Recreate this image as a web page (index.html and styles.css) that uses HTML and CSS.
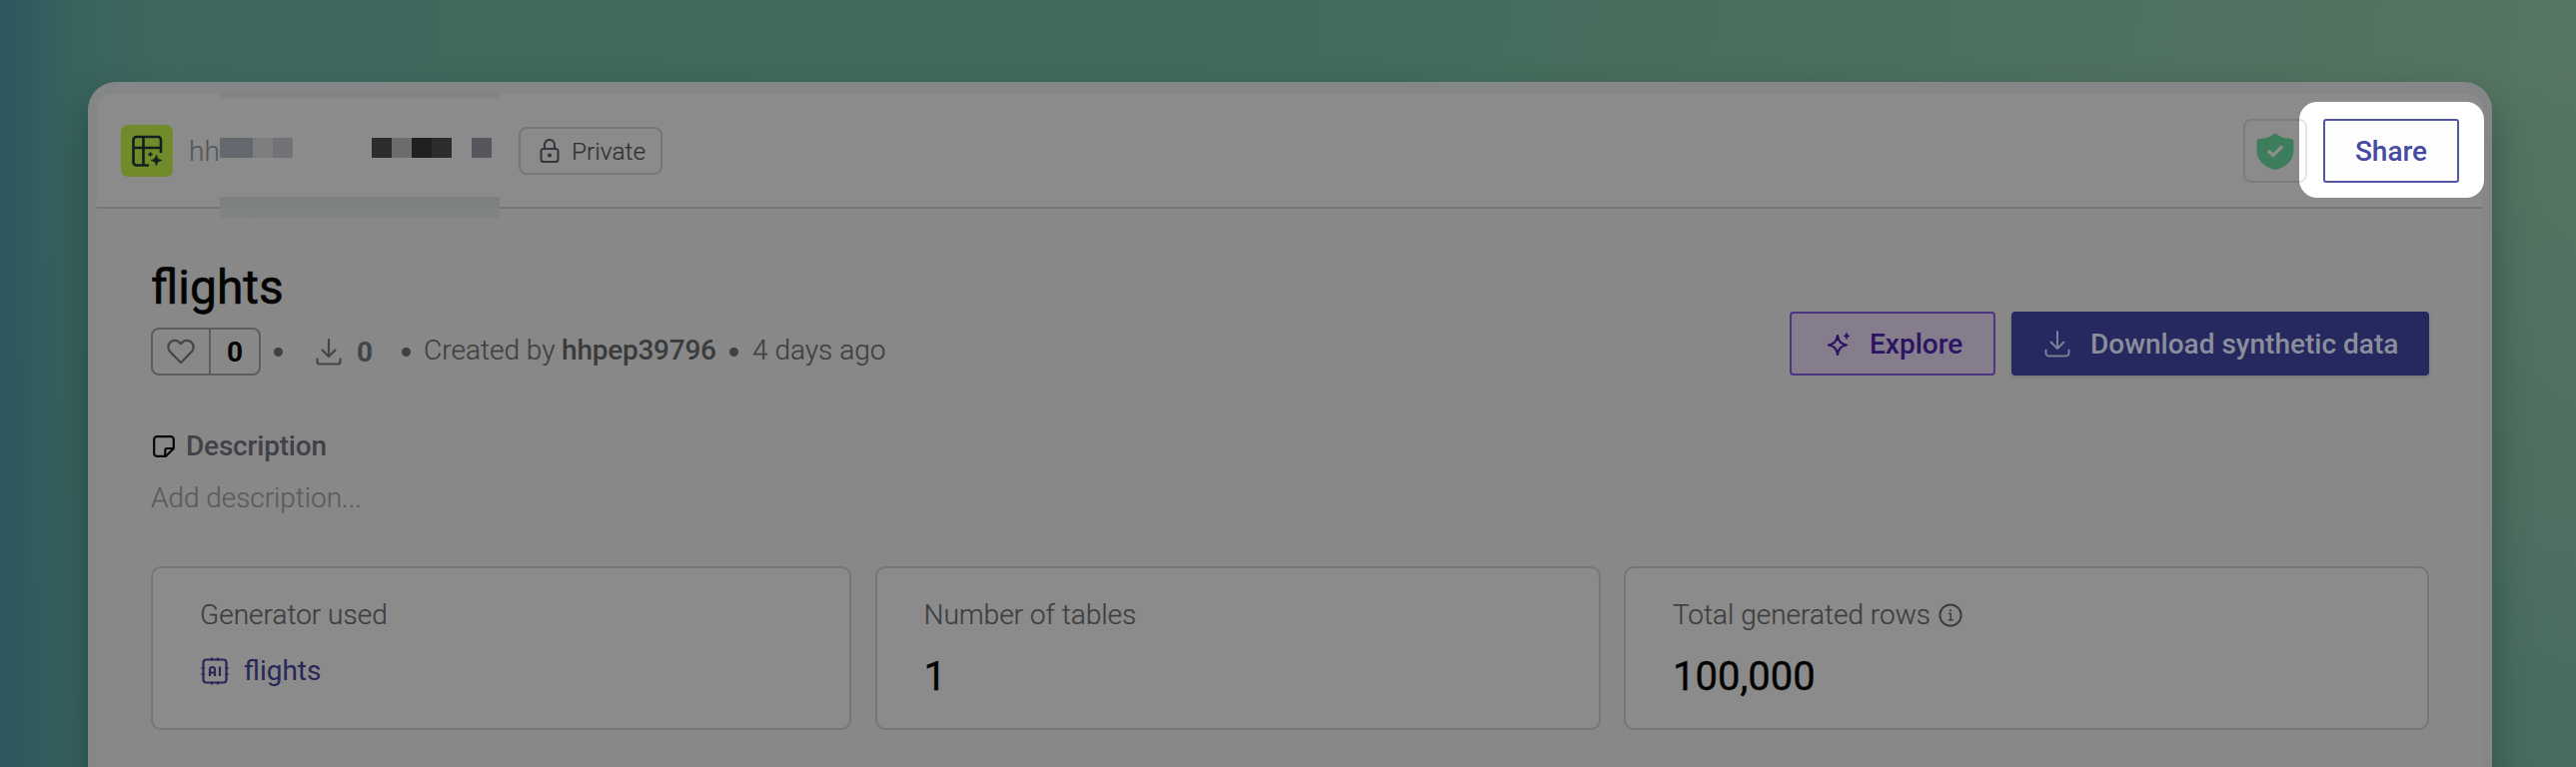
FILE: index.html
```html
<!DOCTYPE html>
<html lang="en">
<head>
<meta charset="utf-8">
<title>flights</title>
<link rel="stylesheet" href="styles.css">
</head>
<body>
<div class="desktop">
<div class="window">
  <header class="header">
    <svg class="logo" viewBox="0 0 52 52" width="52" height="52"><rect width="52" height="52" rx="7" fill="#728b2a"/><g fill="none" stroke="#10201e" stroke-width="2.600" stroke-linecap="round" stroke-linejoin="round"><path d="M27 40.500H15.500a3 3 0 0 1-3-3V15a3 3 0 0 1 3-3H37a3 3 0 0 1 3 3v12M12.500 23H40M22.500 12v28.500"/></g><path fill="#10201e" d="M35.500 30c.8 3.700 1.800 4.700 5.500 5.500-3.700.8-4.700 1.800-5.500 5.500-.8-3.700-1.800-4.700-5.500-5.500 3.700-.8 4.700-1.800 5.500-5.500zM29.500 27c.3 1.600.9 2.200 2.500 2.500-1.600.3-2.200.9-2.500 2.500-.3-1.600-.9-2.200-2.500-2.500 1.600-.3 2.200-.9 2.500-2.500z" stroke="#10201e" stroke-width=".7"/></svg>
    <span class="owner">hh</span>
    <div class="mosaic">
      <i class="m1"></i><i class="m2"></i><i class="m3"></i><i class="m4"></i><i class="m5"></i><i class="m6"></i><i class="m4"></i><i class="m7"></i>
    </div>
    <div class="badge">
      <svg viewBox="0 0 20 24" width="20" height="24" fill="none" stroke="#34373b" stroke-width="2.100"><rect x="1.500" y="10" width="17" height="13" rx="2.500"/><path d="M5 10V6a5 5 0 0 1 10 0v4"/><circle cx="10" cy="16.500" r="1" fill="#34373b"/></svg>
      <span>Private</span>
    </div>
    <div class="shield">
      <svg viewBox="0 0 38 37" width="38" height="37"><path fill="#3c7e5b" d="M19 .5c1 0 2 1 4 2.400C26.500 5 30 5.600 34.500 6c2 .2 2.900 1 2.900 3v9c0 9-7 15.500-15.500 18.200-2 .7-3.800.7-5.800 0C7.600 33.500.6 27 .6 18V9c0-2 .9-2.800 2.900-3C8 5.600 11.500 5 15 2.900 17 1.500 18 .5 19 .5z"/><path d="M12 18l5 4.500 9-9" fill="none" stroke="#8b8f8b" stroke-width="3.400"/></svg>
    </div>
    <div class="spot"><div class="edge"></div><button class="share">Share</button></div>
  </header>
  <main class="main">
    <div class="top">
      <div>
        <h1 class="title">flights</h1>
        <div class="meta">
          <div class="like">
            <div class="heart"><svg viewBox="0 0 28 26" width="28" height="26" fill="none" stroke="#44464a" stroke-width="2.200" stroke-linejoin="round"><path d="M14 24.200 3.500 13.600C.8 10.800.7 6.500 3.300 3.900s6.800-2.600 9.400 0L14 5.200l1.300-1.300c2.600-2.600 6.800-2.600 9.400 0s2.500 6.900-.2 9.700z"/></svg></div>
            <div class="count">0</div>
          </div>
          <i class="dot d1"></i>
          <svg class="dl" viewBox="0 0 26 28" width="26" height="28" fill="none" stroke="#44464a" stroke-width="2.200" stroke-linecap="round" stroke-linejoin="round"><path d="M13 2v17M6.500 12.500 13 19l6.500-6.500M1.500 21.500V24a2.500 2.500 0 0 0 2.500 2.500h18a2.500 2.500 0 0 0 2.500-2.500v-2.500"/></svg>
          <span class="dlcount">0</span>
          <i class="dot d2"></i>
          <span class="by">Created by</span><span class="user">hhpep39796</span>
          <i class="dot d3"></i>
          <span class="ago">4 days ago</span>
        </div>
      </div>
      <div class="actions">
        <button class="btn explore"><svg viewBox="0 0 24 26" width="24" height="26" fill="none" stroke="#2a1463" stroke-width="2.200" stroke-linejoin="round"><path d="M11 5c1.100 6 3 8.300 9 9.500-6 1.200-7.900 3.500-9 9.500-1.100-6-3-8.300-9-9.500C8 13.300 9.900 11 11 5z"/><path d="M20 2c.5 2.400 1 3 3 3.400-2 .4-2.500 1-3 3.300-.5-2.300-1-2.900-3-3.300 2-.4 2.500-1 3-3.400z" fill="#2a1463" stroke-width=".8"/></svg><span>Explore</span></button>
        <button class="btn download"><svg viewBox="0 0 26 28" width="26" height="28" fill="none" stroke="#7d8095" stroke-width="2" stroke-linecap="round" stroke-linejoin="round"><path d="M13 2v17M6.500 12.500 13 19l6.500-6.500M1.500 20.500v3a3 3 0 0 0 3 3h17a3 3 0 0 0 3-3v-3"/></svg><span>Download synthetic data</span></button>
      </div>
    </div>
    <div class="deschead">
      <svg viewBox="0 0 22 22" width="22" height="22" fill="none" stroke="#050505" stroke-width="2.200" stroke-linejoin="round"><path d="M13 20.800H4a2.800 2.800 0 0 1-2.800-2.800V4A2.800 2.800 0 0 1 4 1.200h14A2.800 2.800 0 0 1 20.800 4v9L13 20.800zM12.300 20.800V15a2 2 0 0 1 2-2h6.500"/></svg>
      <span>Description</span>
    </div>
    <div class="placeholder">Add description...</div>
    <section class="cards">
      <div class="card"><div class="label">Generator used</div>
        <div class="link"><svg viewBox="0 0 28 28" width="28" height="28" fill="none" stroke="#292658" stroke-width="2.200"><rect x="2.500" y="2.500" width="23" height="23" rx="3"/><path d="M11 .5v3M17 .5v3M11 24.500v3M17 24.500v3M.5 11h3M.5 17h3M24.500 11h3M24.500 17h3M9 19v-6.500a2.500 2.500 0 0 1 5 0V19M9 15.500h5M19 9.500V19"/></svg><span>flights</span></div>
      </div>
      <div class="card"><div class="label">Number of tables</div><div class="value">1</div></div>
      <div class="card"><div class="label">Total generated rows <svg viewBox="0 0 24 24" width="24" height="24" fill="none" stroke="#3d3d3d"><circle cx="12" cy="12" r="10.600" stroke-width="2"/><path d="M10 10.500h2.300v6M9.800 16.800h5" stroke-width="1.400"/><circle cx="12" cy="7.300" r=".7" fill="#3d3d3d"/></svg></div><div class="value">100,000</div></div>
    </section>
  </main>
</div>
</div>
</body>
</html>
```
FILE: styles.css
```css
* { box-sizing: border-box; }
body { margin: 0; font-family: Roboto, "Liberation Sans", sans-serif; font-size: 28px; line-height: 34px; }
svg { display: block; flex: none; }
button { font: inherit; padding: 0; margin: 0; }
i { display: block; flex: none; }
.desktop {
  height: 768px; overflow: hidden; padding: 82px 84px 0 88px;
  background:
    linear-gradient(90deg, rgba(43,84,94,.9), rgba(43,84,94,.3) 70px, rgba(43,84,94,0) 170px),
    linear-gradient(180deg, rgba(56,96,94,0) 10%, rgba(56,96,94,.45)),
    linear-gradient(95deg, #3e685e, #426b5c 50%, #577562);
}
.window {
  height: 720px; padding: 12px 10px 0 9px; background: #858688;
  border-radius: 28px 28px 0 0; box-shadow: 0 18px 36px rgba(10,40,35,.4);
}
.header {
  display: flex; align-items: center; height: 115px; padding: 1px 0 0 24px;
  background: #8b8b8b; border-bottom: 2px solid #757677; border-radius: 14px 14px 0 0;
}
.owner { width: 30px; margin-left: 16px; margin-right: 1px; padding-top: 1px; font-weight: 300; color: #55575a; white-space: nowrap; -webkit-text-stroke: .2px; }
.mosaic {
  display: flex; align-items: flex-start; width: 280px; height: 128px; margin: 8px 0 0; padding-top: 47px; flex: none;
  background: linear-gradient(#838485 7px, transparent 7px, transparent 106px, #7c8081 106px, #818384);
}
.mosaic i { height: 20px; width: 20px; }
.mosaic .m1 { width: 33px; background: #66686f; }
.mosaic .m2 { background: #7c7e80; }
.mosaic .m3 { background: #707276; margin-right: 79px; }
.mosaic .m4 { background: #2c2c2c; }
.mosaic .m5 { background: #6c6c6c; }
.mosaic .m6 { background: #202020; }
.mosaic .m7 { background: #55575c; margin-left: 20px; }
.badge {
  display: flex; align-items: center; width: 144px; height: 48px; margin-left: 19px; padding-left: 19px; gap: 12px;
  border: 2px solid #75777a; border-radius: 8px; font-size: 24.5px; font-weight: 300; color: #303235;
  -webkit-text-stroke: .2px;
}
.badge span { padding-top: 1px; }
.shield {
  display: flex; align-items: center; width: 64px; height: 64px; margin-left: auto; padding-left: 11px;
  border: 2px solid #7b7c7d; border-radius: 8px;
}
.spot {
  position: relative; display: flex; align-items: center; width: 185px; height: 96px; margin: -2px -2px 0 -8px; padding-left: 24px; padding-top: 2px;
  background: #fff; border-radius: 18px; overflow: hidden; flex: none;
}
.edge { position: absolute; left: -54px; top: 17px; width: 62px; height: 64px; border: 2px solid #e3e4e6; border-radius: 8px; }
.share { width: 136px; height: 64px; padding-top: 1px; background: #fefefe; border: 2px solid #5256a8; border-radius: 3px; color: #464aa3; font-weight: 500; }
.main { height: 600px; padding: 51px 53px 0 54px; background: #888; }
.top { display: flex; justify-content: space-between; align-items: flex-end; }
.title { margin: 0 0 12px; font-size: 48px; line-height: 56px; font-weight: 400; color: #040404; -webkit-text-stroke: .6px #040404; }
.meta { display: flex; align-items: center; height: 48px; color: #3f4042; font-weight: 300; white-space: nowrap; }
.like { display: flex; width: 110px; height: 48px; border: 2px solid #5b5d60; border-radius: 8px; }
.heart { display: flex; align-items: center; justify-content: center; width: 58px; border-right: 2px solid #5b5d60; }
.count { flex: 1; text-align: center; font-weight: 700; color: #030303; line-height: 46px; }
.dot { width: 9px; height: 9px; border-radius: 50%; background: #3f4042; }
.d1 { margin-left: 13px; }
.dl { margin-left: 33px; }
.dlcount { margin-left: 15px; font-weight: 700; color: #42444c; padding-top: 1px; }
.d2 { margin-left: 29px; }
.by { margin-left: 13px; width: 138px; margin-top: -2px; -webkit-text-stroke: .2px; }
.user { width: 153px; font-weight: 500; color: #3a3b3c; margin-top: -2px; letter-spacing: -.25px; }
.d3 { margin-left: 15px; }
.ago { margin-left: 14px; margin-top: -2px; -webkit-text-stroke: .2px; }
.actions { display: flex; gap: 16px; }
.btn { display: flex; align-items: center; height: 64px; border-radius: 4px; font-weight: 500; white-space: nowrap; }
.btn span { padding-top: 1px; }
.explore { width: 206px; padding-left: 35px; gap: 19px; background: #857c8c; border: 2px solid #4d3583; color: #2a1463; }
.download { width: 418px; padding-left: 33px; gap: 20px; background: #25295f; border: 0; color: #8c8e9b; box-shadow: 0 2px 4px rgba(0,0,0,.12); }
.deschead { display: flex; align-items: center; gap: 11px; margin-top: 54px; padding-left: 2px; font-weight: 500; color: #404248; letter-spacing: -.2px; }
.placeholder { margin-top: 18px; font-weight: 300; color: #5a5c5f; letter-spacing: -.05px; -webkit-text-stroke: .2px; }
.cards { display: grid; grid-template-columns: 701px 726px 806px; justify-content: space-between; margin-top: 51px; }
.card { height: 164px; padding: 30px 0 0 47px; border: 2px solid #757677; border-radius: 10px; background: #8b8b8b; }
.label { display: flex; align-items: center; gap: 8px; font-weight: 300; color: #3d3d3d; white-space: nowrap; -webkit-text-stroke: .2px; }
.link { display: flex; align-items: center; gap: 15px; margin-top: 24px; line-height: 30px; color: #292658; padding-left: 1px; }
.value { margin-top: 25px; font-size: 40px; line-height: 40px; color: #030303; -webkit-text-stroke: .4px #030303; }
```
